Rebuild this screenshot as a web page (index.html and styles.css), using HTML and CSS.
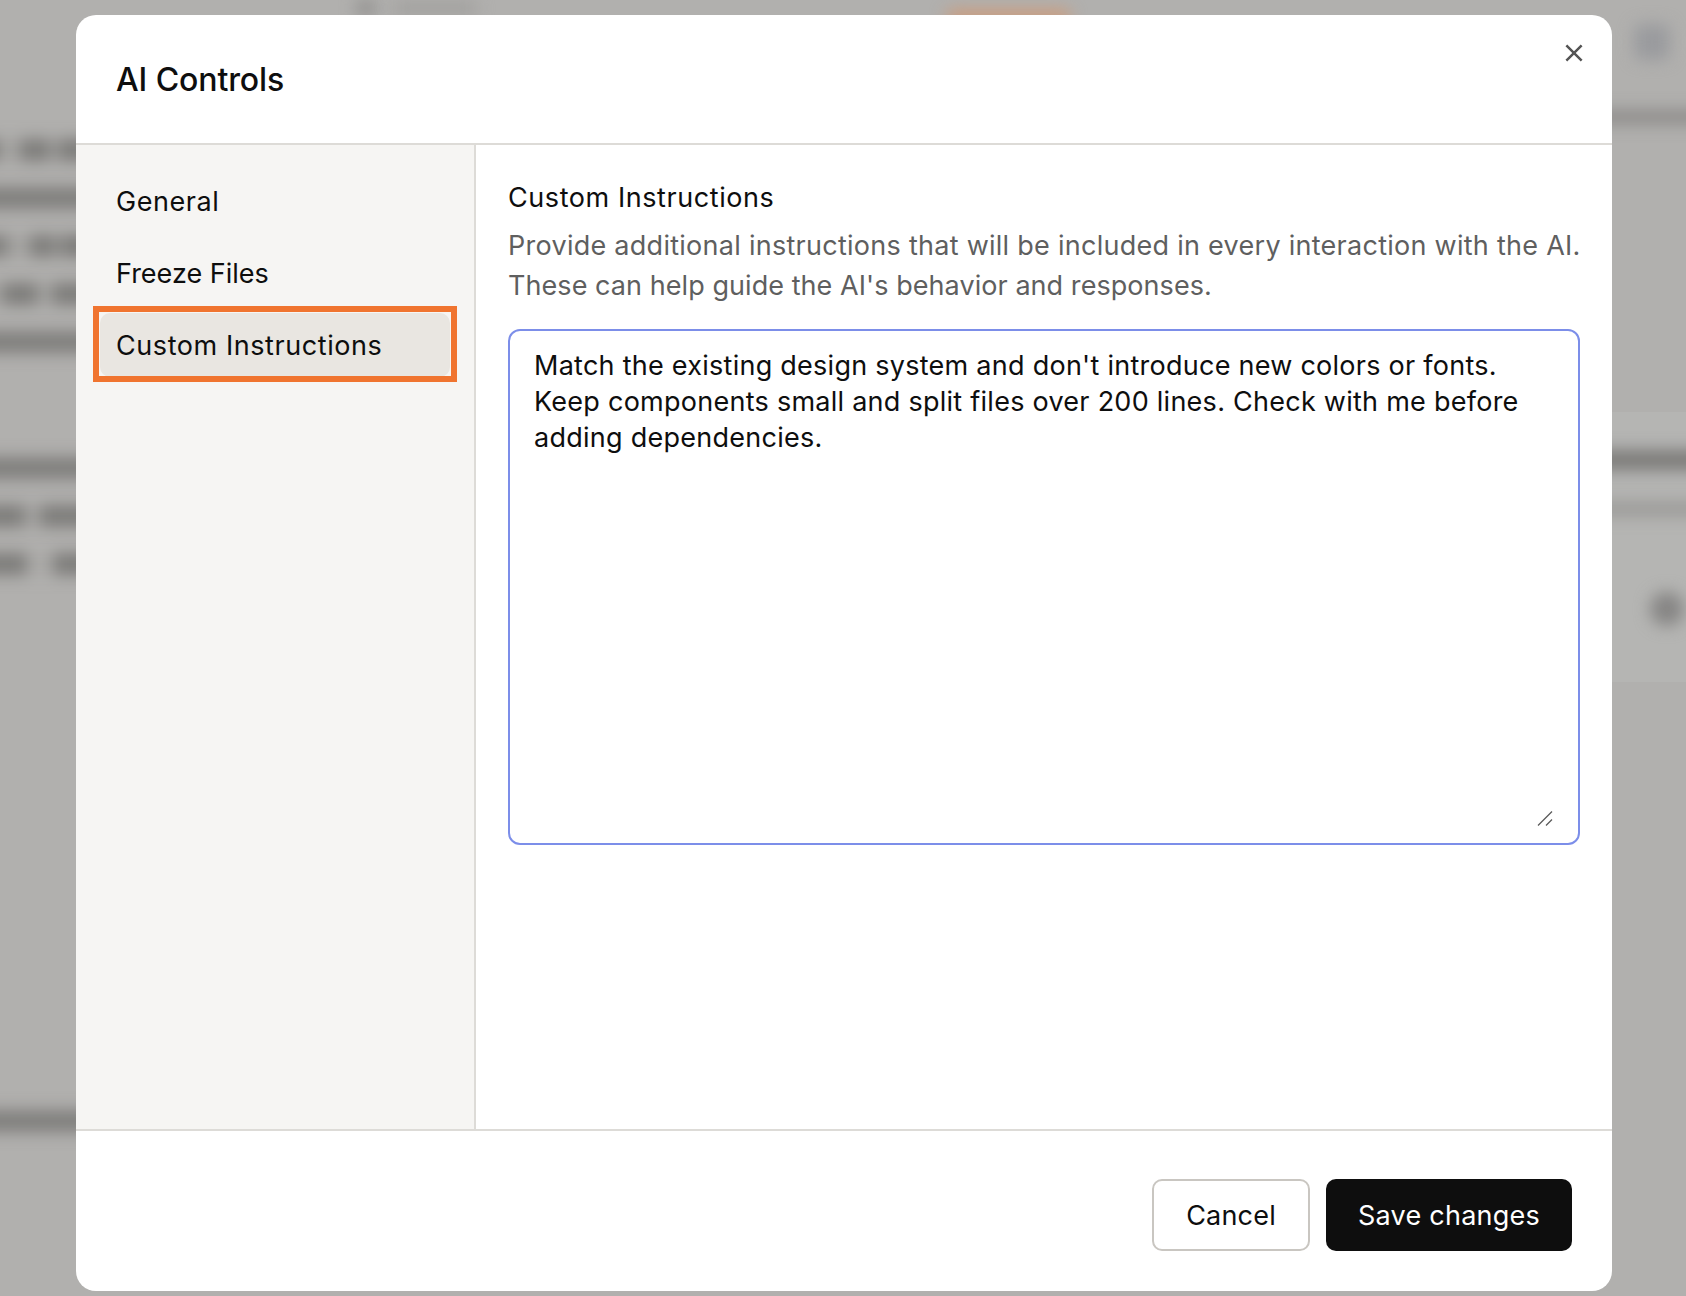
FILE: index.html
```html
<!DOCTYPE html>
<html lang="en">
<head>
<meta charset="utf-8">
<title>AI Controls</title>
<link rel="stylesheet" href="styles.css">
</head>
<body>
<div class="backdrop" aria-hidden="true">
  <div class="bd-top">
    <span class="blot bd-crumb-icon"></span>
    <span class="blot bd-crumb"></span>
    <span class="blot bd-orange"></span>
  </div>
  <div class="bd-left">
    <span class="blot line l1"></span><span class="blot line"></span><span class="blot line l3"></span><span class="blot line l4"></span><span class="blot line"></span>
    <span class="blot line gap-a"></span><span class="blot line l7"></span><span class="blot line l8"></span>
    <span class="blot line gap-b"></span>
  </div>
  <div class="bd-right">
    <span class="blot bd-avatar"></span>
    <span class="blot line r-line"></span>
    <div class="bd-card">
      <span class="blot line r-title"></span>
      <span class="blot line r-sub"></span>
      <span class="blot bd-dot"></span>
    </div>
  </div>
</div>

<section class="modal" role="dialog" aria-labelledby="modal-title">
  <header class="modal-head">
    <h1 id="modal-title" class="modal-title">AI Controls</h1>
    <button class="close" aria-label="Close">
      <svg viewBox="0 0 16 16" width="18" height="18" fill="none" stroke="currentColor" stroke-width="2.2"><path d="M1.2 1.2 14.8 14.8M14.8 1.2 1.2 14.8"/></svg>
    </button>
  </header>
  <div class="modal-body">
    <nav class="side">
      <a class="side-item wide">General</a>
      <a class="side-item">Freeze Files</a>
      <a class="side-item wide is-active">Custom Instructions<span class="callout"></span></a>
    </nav>
    <main class="panel">
      <h2 class="panel-title">Custom Instructions</h2>
      <p class="panel-desc">Provide additional instructions that will be included in every interaction with the AI.<br><span class="desc-second">These can help guide the AI's behavior and responses.</span></p>
      <div class="field">
        <textarea class="instructions">Match the existing design system and don't introduce new colors or fonts. Keep components small and split files over 200 lines. Check with me before adding dependencies.</textarea>
        <svg class="grip" viewBox="0 0 16 16" width="16" height="16" fill="none" stroke="#5c5c5c" stroke-width="1.3"><path d="M1 15.5 15 1.5M9 15.5 15 9.5"/></svg>
      </div>
    </main>
  </div>
  <footer class="modal-foot">
    <button class="btn btn-ghost">Cancel</button>
    <button class="btn btn-dark">Save changes</button>
  </footer>
</section>
</body>
</html>
```

FILE: styles.css
```css
* { box-sizing: border-box; }
html, body { margin: 0; height: 100%; }
body {
  position: relative;
  width: 1686px;
  height: 1296px;
  overflow: hidden;
  background: #b1b0ae;
  font-family: Inter, "Noto Sans", sans-serif;
  color: #0e0e0e;
}

/* blurred page behind the dialog */
.backdrop { position: absolute; inset: 0; overflow: hidden; }
.blot { display: block; filter: blur(8px); }
.bd-top { display: flex; align-items: flex-start; position: absolute; top: 0; left: 355px; }
.bd-crumb-icon { width: 22px; height: 16px; background: #8f8e8c; border-radius: 50%; margin: 0 16px 0 0; }
.bd-crumb { width: 84px; height: 12px; background: #9f9e9c; margin-top: 2px; }
.bd-orange { width: 125px; height: 14px; margin: 10px 0 0 469px; background: #cf9a78; border-radius: 8px; }
.bd-left { position: absolute; left: -20px; top: 139px; width: 120px; display: flex; flex-direction: column; gap: 26px; }
.line { height: 22px; background: #7f7e7c; }
.bd-left .l1 { background: linear-gradient(90deg, #7f7e7c 0 20px, #a6a5a3 20px 40px, #7c7b79 40px 70px, #a6a5a3 70px 78px, #7c7b79 78px); }
.bd-left .l3 { background: linear-gradient(90deg, #7f7e7c 0 28px, #a6a5a3 28px 50px, #7c7b79 50px 75px, #a6a5a3 75px 80px, #7c7b79 80px); }
.bd-left .l4 { background: linear-gradient(90deg, #a6a5a3 0 22px, #7c7b79 22px 58px, #a6a5a3 58px 72px, #7c7b79 72px); }
.bd-left .l7 { background: linear-gradient(90deg, #7c7b79 0 45px, #a6a5a3 45px 60px, #7c7b79 60px); }
.bd-left .l8 { background: linear-gradient(90deg, #7c7b79 0 47px, #abaaa8 47px 73px, #7c7b79 73px); }
.gap-a { margin-top: 78px; }
.gap-b { margin-top: 509px; }
.bd-right { position: absolute; left: 1590px; top: 0; width: 120px; }
.bd-avatar { width: 36px; height: 36px; margin: 24px 0 0 44px; background: #9a9b9e; border-radius: 8px; }
.r-line { height: 14px; margin-top: 50px; background: #8c8a88; }
.bd-card { margin-top: 288px; height: 270px; padding-top: 38px; background: linear-gradient(90deg, #b1b0ae 0 22px, #b5b5b3 22px); }
.r-title { height: 20px; background: #7a7977; }
.r-sub { height: 14px; margin-top: 32px; background: #999896; }
.bd-dot { width: 34px; height: 34px; margin: 76px 0 0 60px; border-radius: 50%; background: #868584; }

/* dialog */
.modal {
  position: relative;
  width: 1536px;
  height: 1276px;
  left: 76px;
  top: 15px;
  display: flex;
  flex-direction: column;
  background: #fff;
  border-radius: 20px;
  overflow: hidden;
}
.modal-head {
  flex: none;
  height: 130px;
  padding: 0 40px;
  display: flex;
  align-items: center;
  border-bottom: 2px solid #dddbd7;
}
.modal-title { margin: 0; font-size: 32px; font-weight: 500; letter-spacing: -0.1px; }
.close {
  position: absolute;
  top: 26px;
  right: 26px;
  width: 24px;
  height: 24px;
  padding: 0;
  display: flex;
  align-items: center;
  justify-content: center;
  border: 0;
  background: none;
  color: #555;
}
.modal-body { flex: 1; display: flex; min-height: 0; }
.side {
  flex: none;
  width: 400px;
  padding: 24px;
  display: flex;
  flex-direction: column;
  gap: 8px;
  background: #f6f5f3;
  border-right: 2px solid #dddbd7;
}
.side-item {
  position: relative;
  height: 64px;
  padding: 0 16px;
  display: flex;
  align-items: center;
  font-size: 27px;
  border-radius: 10px;
}
.wide { letter-spacing: 0.57px; }
.is-active { background: #e9e6e1; }
.callout {
  position: absolute;
  inset: -7px -7px -5px;
  border: 6px solid #f0742f;
}
.panel { flex: 1; padding: 33px 32px 32px; min-width: 0; }
.panel-title { margin: 0; font-size: 27px; font-weight: 400; line-height: 40px; letter-spacing: 0.57px; }
.panel-desc { margin: 8px 0 23px; font-size: 27px; line-height: 40px; color: #5f5f5f; letter-spacing: 0.27px; white-space: nowrap; }
.desc-second { letter-spacing: 0.06px; }
.field { position: relative; width: 1072px; height: 516px; }
.instructions {
  display: block;
  width: 100%;
  height: 100%;
  padding: 17px 24px 16px;
  border: 2px solid #7c8ee9;
  border-radius: 12px;
  outline: none;
  resize: none;
  font: 400 27px/36px Inter, "Noto Sans", sans-serif;
  letter-spacing: 0.26px;
  color: #0e0e0e;
  background: #fff;
}
.grip { position: absolute; right: 27px; bottom: 19px; }
.modal-foot {
  flex: none;
  height: 162px;
  padding: 48px 40px 0;
  display: flex;
  justify-content: flex-end;
  gap: 16px;
  border-top: 2px solid #dddbd7;
}
.btn {
  height: 72px;
  border-radius: 10px;
  font: 400 27px Inter, "Noto Sans", sans-serif;
}
.btn-ghost { width: 158px; background: #fff; border: 2px solid #c9c6c1; color: #0e0e0e; letter-spacing: 0.2px; }
.btn-dark { width: 246px; background: #0e0e0e; border: 0; color: #fff; letter-spacing: 0.25px; }
```
